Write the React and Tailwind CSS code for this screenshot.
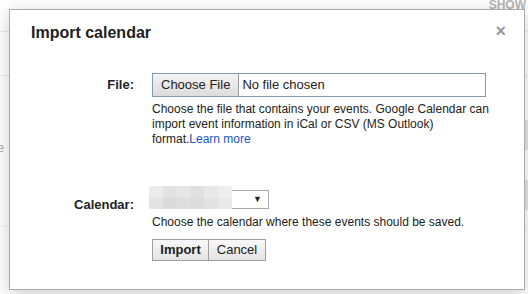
export default function App() {
  return (
    <div className="relative w-[528px] h-[294px] overflow-hidden bg-white font-['Liberation_Sans',Arial,sans-serif] text-[#222]">
      {/* page behind the dialog */}
      <div className="absolute left-0 top-[31px] w-full h-px bg-[#ececec]" />
      <div className="absolute left-0 top-[75px] w-full h-px bg-[#ececec]" />
      <div className="absolute left-0 top-[226px] w-full h-px bg-[#f0f0f0]" />
      <div className="absolute right-[2px] top-[-4px] text-[12px] font-bold text-[#b5b5b5]">SHOW</div>
      <div className="absolute left-[-3px] top-[138px] text-[13px] text-[#aaa]">e</div>
      <div className="absolute right-0 top-[120px] w-[3px] h-[30px] bg-[#e6e6e6]" />
      <div className="absolute right-0 top-[180px] w-[3px] h-[30px] bg-[#e6e6e6]" />

      {/* dialog */}
      <div className="absolute left-[9px] top-[9px] w-[516px] h-[281px] border border-[#acacac] bg-white shadow-[0_4px_16px_rgba(0,0,0,0.2)]">
        <button className="absolute right-[18px] top-[12px] text-[18px] leading-[18px] text-[#999] font-bold">×</button>
        <h1 className="pl-[21px] pt-[13px] text-[16px] leading-[20px] font-bold">Import calendar</h1>

        <div className="mt-[30px] flex items-center">
          <div className="w-[124px] text-right text-[13px] font-bold">File:</div>
          <div className="ml-[18px] flex h-[24px] w-[334px] items-stretch border border-[#7f9db9] bg-white">
            <div className="flex items-center border-r border-[#9a9a9a] bg-gradient-to-b from-[#f4f4f4] to-[#dcdcdc] px-[8px] text-[13px]">
              Choose File
            </div>
            <div className="flex items-center pl-[3px] text-[13px]">No file chosen</div>
          </div>
        </div>
        <p className="ml-[142px] mt-[5px] whitespace-nowrap text-[12px] leading-[15px]">
          Choose the file that contains your events. Google Calendar can
          <br />
          import event information in iCal or CSV (MS Outlook)
          <br />
          format.<a className="text-[#15c]">Learn more</a>
        </p>

        <div className="mt-[39px] flex h-[23px] items-start">
          <div className="mt-[11px] w-[124px] text-right text-[13px] leading-[15px] font-bold">Calendar:</div>
          <div className="ml-[15px] flex h-[23px]">
            <div className="grid w-[83px] grid-cols-6 grid-rows-2">
              <div className="bg-[#ececec]" />
              <div className="bg-[#e2e2e2]" />
              <div className="bg-[#e6e6e6]" />
              <div className="bg-[#e0e0e0]" />
              <div className="bg-[#e8e8e8]" />
              <div className="bg-[#eeeeee]" />
              <div className="bg-[#e4e4e4]" />
              <div className="bg-[#dadada]" />
              <div className="bg-[#dedede]" />
              <div className="bg-[#dcdcdc]" />
              <div className="bg-[#e2e2e2]" />
              <div className="bg-[#e9e9e9]" />
            </div>
            <div className="mt-[4px] flex h-[19px] w-[37px] items-center justify-end border border-[#a8a8a8] border-l-0 bg-white pr-[6px] text-[9px] text-[#222]">
              ▼
            </div>
          </div>
        </div>
        <p className="ml-[142px] mt-[6px] whitespace-nowrap text-[12px] leading-[15px]">
          Choose the calendar where these events should be saved.
        </p>
        <div className="ml-[142px] mt-[9px] flex">
          <button className="h-[22px] w-[57px] border border-[#a0a0a0] bg-gradient-to-b from-[#f8f8f8] to-[#e4e4e4] text-[13px] font-bold text-[#222]">
            Import
          </button>
          <button className="h-[22px] w-[57px] border border-l-0 border-[#a0a0a0] bg-gradient-to-b from-[#f8f8f8] to-[#e4e4e4] text-[13px] text-[#222]">
            Cancel
          </button>
        </div>
      </div>
    </div>
  );
}
